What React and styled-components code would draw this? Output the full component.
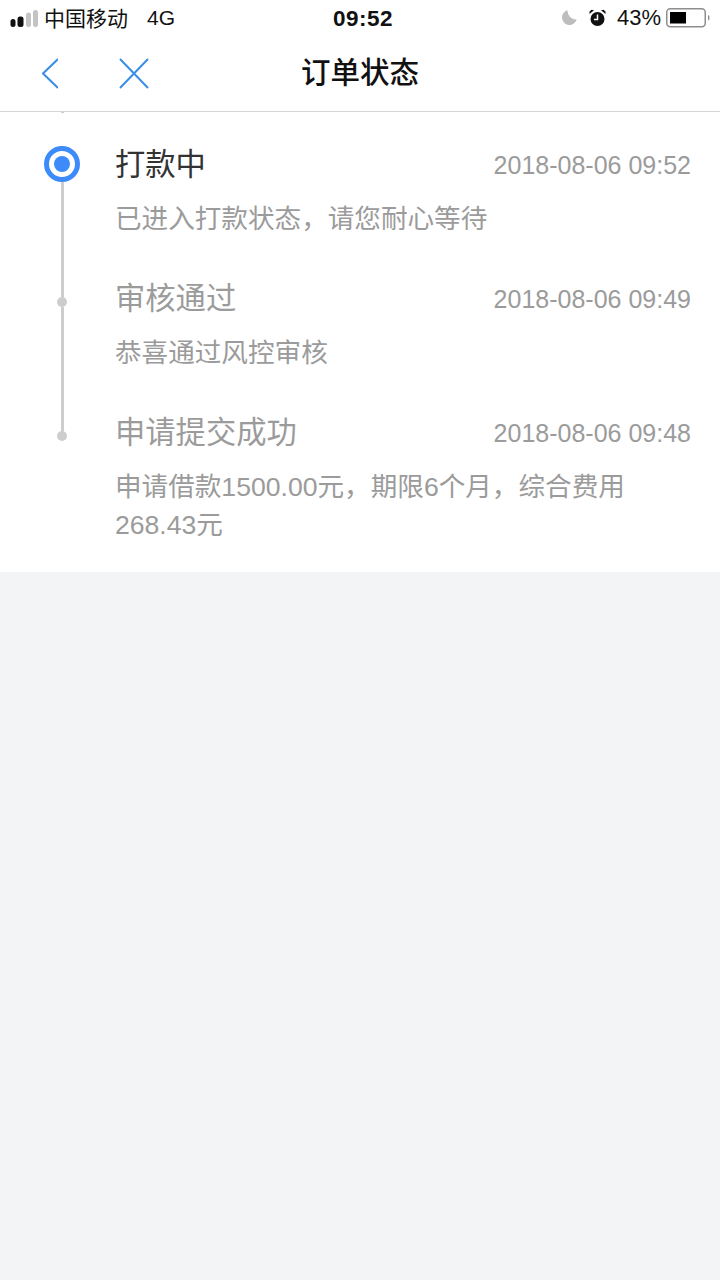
import React from "react";
import styled, { createGlobalStyle } from "styled-components";

const GlobalStyle = createGlobalStyle`
  html, body {
    margin: 0;
    height: 100%;
    background: #f3f4f6;
  }
  body {
    font-family: "Liberation Sans", "Noto Sans CJK SC", sans-serif;
  }
`;

const Page = styled.div`
  width: 720px;
  min-height: 1280px;
  background: #f3f4f6;
`;

const StatusBar = styled.div`
  height: 35px;
  padding: 0 10px;
  background: #fff;
  display: grid;
  grid-template-columns: 1fr auto 1fr;
  align-items: center;
  color: #111;
  font-size: 21px;
`;

const StatusLeft = styled.div`
  display: flex;
  align-items: center;
`;

const Carrier = styled.span`
  margin-left: 6px;
  padding-bottom: 2px;
`;

const Network = styled.span`
  margin-left: 19px;
`;

const Clock = styled.span`
  padding: 2px 0 0 6px;
  font-size: 22.5px;
  font-weight: 700;
  letter-spacing: 0.5px;
`;

const StatusRight = styled.div`
  display: flex;
  align-items: center;
  justify-content: flex-end;
`;

const Percent = styled.span`
  margin: 0 5px 0 11px;
  font-size: 22px;
`;

const AlarmSlot = styled.span`
  display: flex;
  margin-left: 11px;
`;

const NavBar = styled.header`
  height: 76px;
  background: #fff;
  border-bottom: 1px solid #d4d4d6;
  display: grid;
  grid-template-columns: 1fr auto 1fr;
  align-items: center;
`;

const NavButtons = styled.div`
  display: flex;
  align-items: center;
  gap: 61px;
  padding-left: 42px;
`;

const NavIcon = styled.svg`
  display: block;
  fill: none;
  stroke: #3a8ee6;
  stroke-width: 2;
`;

const NavTitle = styled.h1`
  margin: 0;
  padding-bottom: 6px;
  font-size: 29.5px;
  font-weight: 500;
  color: #111;
`;

const Timeline = styled.ol`
  margin: 0;
  padding: 0 0 20px;
  list-style: none;
  background: #fff;
`;

const Step = styled.li`
  display: flex;
`;

const Track = styled.div`
  width: 115px;
  flex: none;
  display: flex;
  flex-direction: column;
  align-items: flex-start;
`;

const TrackLine = styled.div`
  width: 3px;
  margin-left: 61px;
  background: #cdcdcf;
  height: ${(p) => p.$height || 0}px;
  flex: ${(p) => (p.$grow ? 1 : "none")};
`;

const CurrentDot = styled.div`
  width: 36px;
  height: 36px;
  margin: 33px 0 0 44px;
  flex: none;
  box-sizing: border-box;
  border: 5px solid #3d8bfb;
  border-radius: 50%;
  background: #fff;
  display: flex;
  align-items: center;
  justify-content: center;

  &::after {
    content: "";
    width: 16px;
    height: 16px;
    border-radius: 50%;
    background: #3d8bfb;
  }
`;

const PastDot = styled.div`
  width: 10px;
  height: 10px;
  margin-left: 57px;
  flex: none;
  border-radius: 50%;
  background: #cdcdcf;
`;

const StepBody = styled.div`
  flex: 1;
  min-width: 0;
  padding: 33px 29px 8px 0;
`;

const StepHead = styled.div`
  display: flex;
  align-items: center;
  justify-content: space-between;
  height: 40px;
`;

const StepTitle = styled.h2`
  margin: 0;
  padding-bottom: 6px;
  font-size: 30.3px;
  font-weight: 400;
  color: ${(p) => (p.$current ? "#333" : "#9b9b9b")};
`;

const StepTime = styled.time`
  font-size: 25px;
  color: #9b9b9b;
`;

const StepText = styled.p`
  margin: 15px 0 0;
  padding-right: 60px;
  font-size: 26.6px;
  line-height: 38px;
  color: #9b9b9b;
`;

const steps = [
  {
    title: "打款中",
    time: "2018-08-06 09:52",
    text: "已进入打款状态\uFF0C请您耐心等待",
    current: true,
  },
  {
    title: "审核通过",
    time: "2018-08-06 09:49",
    text: "恭喜通过风控审核",
  },
  {
    title: "申请提交成功",
    time: "2018-08-06 09:48",
    text: "申请借款1500.00元\uFF0C期限6个月\uFF0C综合费用268.43元",
  },
];

function SignalIcon() {
  return (
    <svg width="28" height="18" viewBox="0 0 28 18">
      <rect x="0.5" y="10" width="5" height="8" rx="2.5" fill="#111" />
      <rect x="7.5" y="7.5" width="6" height="10.5" rx="2.5" fill="#111" />
      <rect x="16" y="3.5" width="5" height="14.5" rx="2.5" fill="#c4c4c4" />
      <rect x="23" y="1" width="5" height="17" rx="2.5" fill="#c4c4c4" />
    </svg>
  );
}

function MoonIcon() {
  return (
    <svg width="17" height="17" viewBox="0 0 17 17">
      <path d="M6.5 1.2A7.5 7.5 0 1 0 15.7 10.6 9 9 0 0 1 6.5 1.2z" fill="#bdbdbd" />
    </svg>
  );
}

function AlarmIcon() {
  return (
    <svg width="17" height="18" viewBox="0 0 17 18">
      <circle cx="8.5" cy="10" r="7" fill="#111" />
      <path d="M8.5 5.5V10.5H5" fill="none" stroke="#fff" strokeWidth="1.5" />
      <path d="M0.5 5 5 1.2 2.500 0.8 0.5 2.5z" fill="#111" />
      <path d="M16.5 5 12 1.2 14.500 0.8 16.5 2.5z" fill="#111" />
    </svg>
  );
}

function BatteryIcon() {
  return (
    <svg width="44" height="20" viewBox="0 0 44 20">
      <rect x="0.75" y="0.75" width="38.5" height="18" rx="3.5" fill="none" stroke="#8e8e8e" strokeWidth="1.5" />
      <rect x="4" y="4" width="16" height="11.5" fill="#000" />
      <path d="M42 7c1.2 0.4 1.5 1.5 1.5 2.8s-0.3 2.3-1.5 2.7z" fill="#8e8e8e" />
    </svg>
  );
}

function App() {
  return (
    <Page>
      <GlobalStyle />
      <StatusBar>
        <StatusLeft>
          <SignalIcon />
          <Carrier>中国移动</Carrier>
          <Network>4G</Network>
        </StatusLeft>
        <Clock>09:52</Clock>
        <StatusRight>
          <MoonIcon />
          <AlarmSlot>
            <AlarmIcon />
          </AlarmSlot>
          <Percent>43%</Percent>
          <BatteryIcon />
        </StatusRight>
      </StatusBar>

      <NavBar>
        <NavButtons>
          <NavIcon width="16" height="31" viewBox="0 0 16 31">
            <path d="M16 1 1 15.5 16 30" />
          </NavIcon>
          <NavIcon width="30" height="31" viewBox="0 0 30 31">
            <path d="M1 1 29 30M29 1 1 30" />
          </NavIcon>
        </NavButtons>
        <NavTitle>订单状态</NavTitle>
      </NavBar>

      <Timeline>
        {steps.map((step, i) => (
          <Step key={step.time}>
            <Track>
              {step.current ? (
                <>
                  <TrackLine $height={1} />
                  <CurrentDot />
                  <TrackLine $grow />
                </>
              ) : (
                <>
                  <TrackLine $height={51} />
                  <PastDot />
                  {i < steps.length - 1 && <TrackLine $grow />}
                </>
              )}
            </Track>
            <StepBody>
              <StepHead>
                <StepTitle $current={step.current}>{step.title}</StepTitle>
                <StepTime>{step.time}</StepTime>
              </StepHead>
              <StepText>{step.text}</StepText>
            </StepBody>
          </Step>
        ))}
      </Timeline>
    </Page>
  );
}

export default App;
